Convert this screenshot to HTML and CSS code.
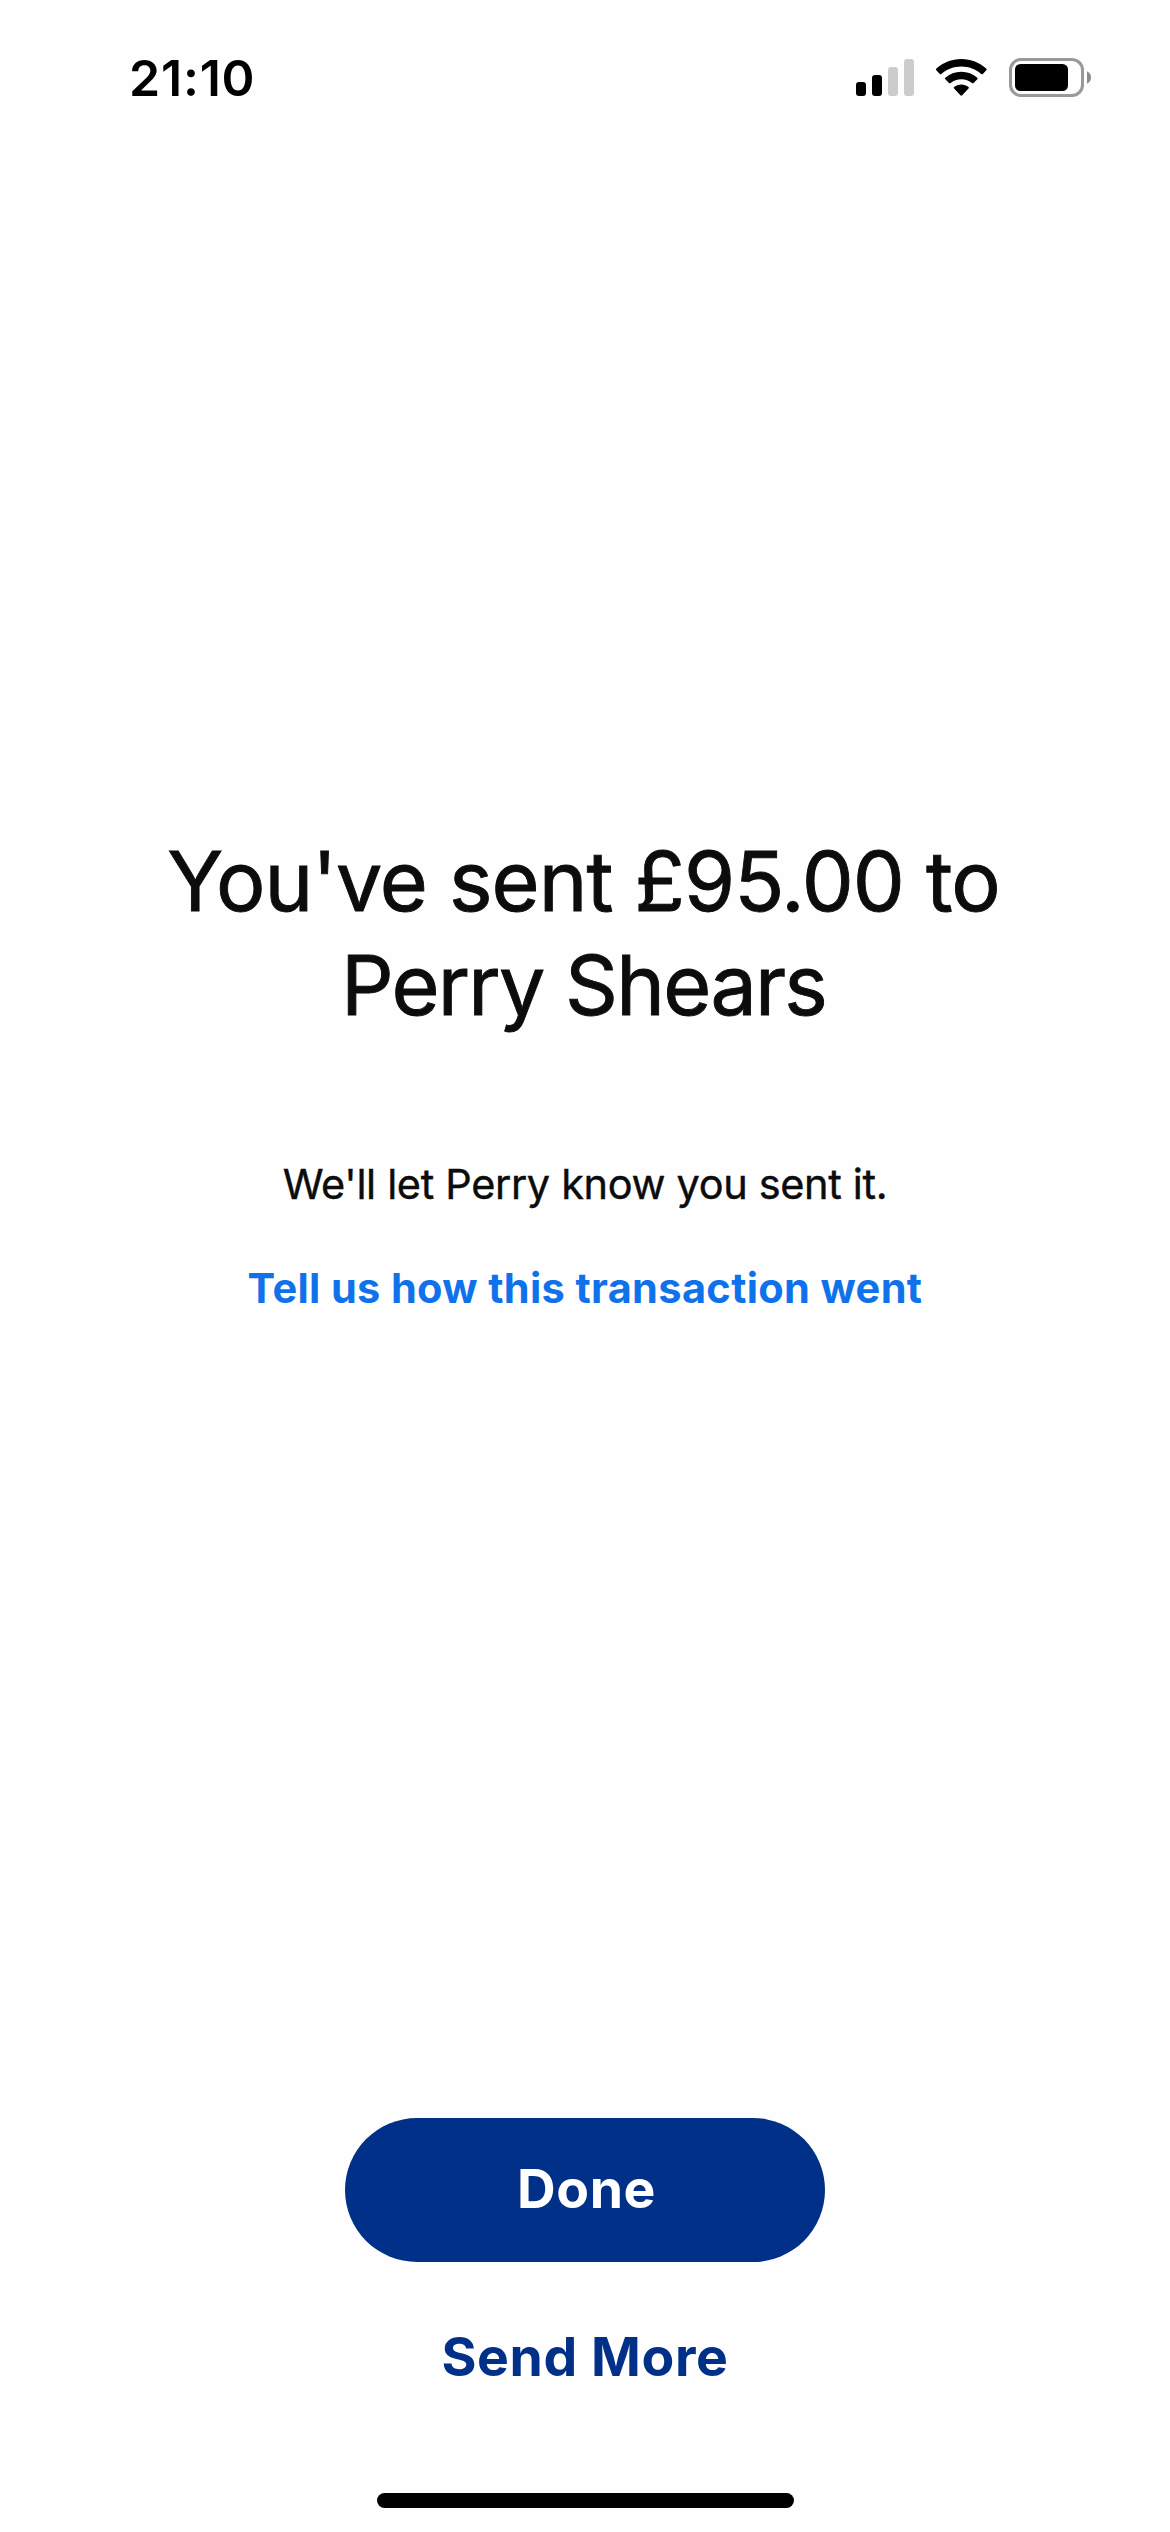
FILE: index.html
```html
<!DOCTYPE html>
<html lang="en">
<head>
<meta charset="utf-8">
<title>Payment sent</title>
<link rel="stylesheet" href="styles.css">
</head>
<body>
<div class="screen">
  <header class="status">
    <span class="time">21:10</span>
    <div class="indicators">
      <svg class="signal" width="58" height="37" viewBox="0 0 58 37">
        <rect x="0" y="23" width="10" height="14" rx="3"/>
        <rect x="16" y="16" width="10" height="21" rx="3"/>
        <rect x="32" y="8" width="10" height="29" rx="3" fill="#cccccc"/>
        <rect x="48" y="0" width="10" height="37" rx="3" fill="#cccccc"/>
      </svg>
      <svg class="wifi" width="51" height="37" viewBox="0 0 51 37">
        <path d="M25.300 0C34.800 0 43.700 3.600 50.200 9.600Q51 10.400 50.300 11.200L46.800 14.900Q46 15.600 45.200 14.900C39.800 10.200 32.800 7.500 25.300 7.500S10.800 10.200 5.400 14.900Q4.600 15.600 3.800 14.900L.3 11.200Q-.4 10.400 .4 9.600C6.900 3.600 15.800 0 25.300 0Z"/>
        <path d="M25.300 12.700C31.400 12.700 37 14.900 41.300 18.700Q42.100 19.500 41.300 20.300L37.600 24Q36.800 24.700 36 24C33.200 21.600 29.400 20.200 25.300 20.200S17.400 21.600 14.600 24Q13.800 24.700 13 24L9.300 20.300Q8.500 19.500 9.300 18.700C13.600 14.900 19.200 12.700 25.300 12.700Z"/>
        <path d="M25.300 25.500C28 25.500 30.500 26.400 32.500 28Q33.300 28.800 32.500 29.500L26.200 36.300Q25.300 37.200 24.400 36.300L18.100 29.500Q17.300 28.800 18.100 28C20.100 26.400 22.600 25.500 25.300 25.500Z"/>
      </svg>
      <svg class="battery" width="82" height="39" viewBox="0 0 82 39">
        <rect x="1.500" y="1.500" width="72" height="36" rx="10.500" fill="none" stroke="#999999" stroke-width="3"/>
        <rect x="6" y="6" width="53" height="27" rx="5.500"/>
        <path d="M78 13.300Q82 15.300 82 19.500T78 25.700Z" fill="#8c8c8c"/>
      </svg>
    </div>
  </header>
  <main class="message">
    <h1 class="title">You've sent £95.00 to<br><span class="name">Perry Shears</span></h1>
    <p class="note">We'll let Perry know you sent it.</p>
    <a class="feedback">Tell us how this transaction went</a>
  </main>
  <footer class="actions">
    <button class="done">Done</button>
    <a class="more">Send More</a>
    <div class="home"></div>
  </footer>
</div>
</body>
</html>
```
FILE: styles.css
```css
body {
  margin: 0;
  background: #fefefe;
  font-family: Inter, "Liberation Sans", sans-serif;
}

.screen {
  display: flex;
  flex-direction: column;
  box-sizing: border-box;
  width: 1170px;
  height: 2532px;
  padding-bottom: 24px;
}

.status {
  display: flex;
  justify-content: space-between;
  align-items: center;
  height: 155px;
  padding: 0 79px 0 129px;
}

.time {
  font-size: 50px;
  font-weight: 600;
  letter-spacing: 0.8px;
  line-height: 60px;
}

.indicators {
  display: flex;
  align-items: center;
  gap: 22px;
}

.message {
  display: flex;
  flex-direction: column;
  align-items: center;
  padding-top: 674px;
  color: #0c0c0c;
  text-align: center;
  white-space: nowrap;
}

.title {
  margin: 0 3px 0 0;
  font-size: 82.5px;
  font-weight: 400;
  letter-spacing: -1px;
  line-height: 104px;
  -webkit-text-stroke: 0.9px #0c0c0c;
}

.name {
  letter-spacing: -1.75px;
}

.note {
  margin: 117px 0 44px;
  font-size: 41.5px;
  font-weight: 400;
  letter-spacing: -0.35px;
  line-height: 60px;
  -webkit-text-stroke: 0.4px #0c0c0c;
}

.feedback {
  color: #1072eb;
  font-size: 41.5px;
  font-weight: 700;
  letter-spacing: 0.36px;
  line-height: 60px;
}

.actions {
  display: flex;
  flex-direction: column;
  align-items: center;
  margin-top: auto;
  color: #003087;
  font-size: 53.5px;
  font-weight: 700;
  letter-spacing: 0.6px;
}

.done {
  width: 480px;
  height: 144px;
  padding: 0 0 3px 3px;
  border: 0;
  border-radius: 72px;
  background: #003087;
  color: #fff;
  font: inherit;
  letter-spacing: inherit;
}

.more {
  margin: 63px 0 104px;
  line-height: 64px;
}

.home {
  width: 417px;
  height: 15px;
  margin-left: 1px;
  border-radius: 8px;
  background: #000;
}
```
